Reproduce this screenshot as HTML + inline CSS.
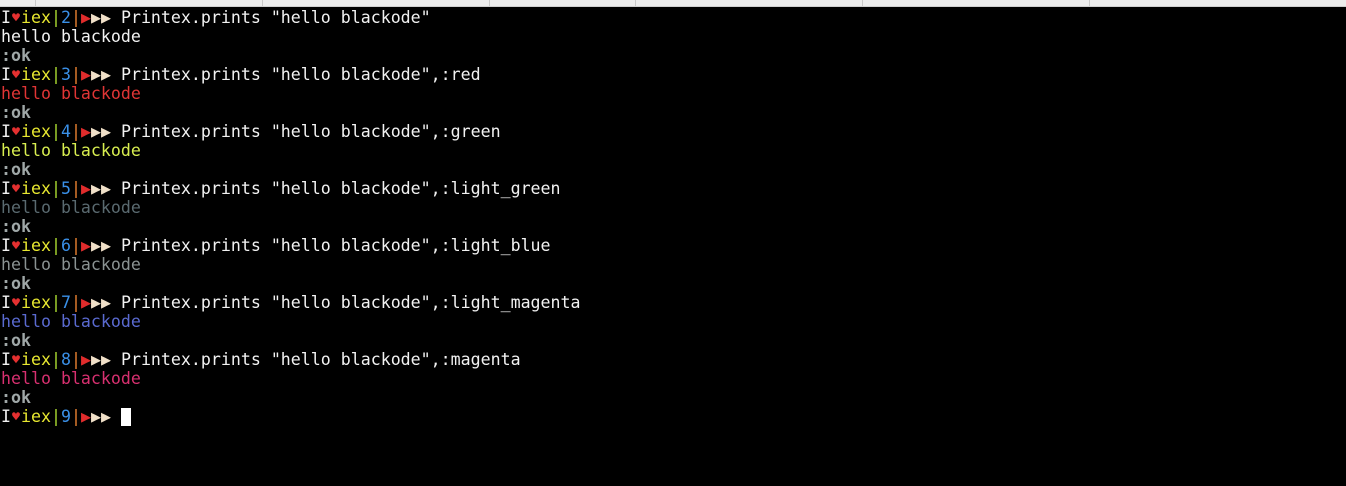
<!DOCTYPE html>
<html><head><style>
html,body{margin:0;padding:0;background:#000;width:1346px;height:486px;overflow:hidden}
.bar{position:absolute;left:0;top:0;width:1346px;height:6px;background:#ececec;border-bottom:1px solid #cfcfcf}
.bar i{position:absolute;top:0;width:1px;height:6px;background:#c8c8c8}
pre{position:absolute;left:1px;top:8px;margin:0;font-family:"DejaVu Sans Mono","Liberation Mono",monospace;font-size:16.6px;line-height:19px;color:#f2f2f2;white-space:pre}
.h{color:#e53030;display:inline-block;width:10px;height:19px;line-height:19px;vertical-align:top;text-align:center;overflow:hidden;transform:scale(0.8)}
.y{color:#e8e830}.g{color:#a8d830}.b{color:#3a90e8}.o{color:#e88030}.r{color:#e02c2c}.w{color:#f0e0c8}
.ok{color:#a0a8a8;font-weight:bold}
.cur{display:inline-block;width:10px;height:18px;background:#fff;vertical-align:-4px}
</style></head><body>
<div class="bar"><i style="left:35px"></i><i style="left:262px"></i><i style="left:489px"></i><i style="left:635px"></i><i style="left:862px"></i><i style="left:1089px"></i></div>
<pre><span>I</span><span class="h">♥</span><span class="y">iex</span><span class="g">|</span><span class="b">2</span><span class="o">|</span><span class="r">▶</span><span class="w">▶▶</span> Printex.prints "hello blackode"
hello blackode
<span class="ok">:ok</span>
<span>I</span><span class="h">♥</span><span class="y">iex</span><span class="g">|</span><span class="b">3</span><span class="o">|</span><span class="r">▶</span><span class="w">▶▶</span> Printex.prints "hello blackode",:red
<span style="color:#e03535">hello blackode</span>
<span class="ok">:ok</span>
<span>I</span><span class="h">♥</span><span class="y">iex</span><span class="g">|</span><span class="b">4</span><span class="o">|</span><span class="r">▶</span><span class="w">▶▶</span> Printex.prints "hello blackode",:green
<span style="color:#d8ee50">hello blackode</span>
<span class="ok">:ok</span>
<span>I</span><span class="h">♥</span><span class="y">iex</span><span class="g">|</span><span class="b">5</span><span class="o">|</span><span class="r">▶</span><span class="w">▶▶</span> Printex.prints "hello blackode",:light_green
<span style="color:#5a6a70">hello blackode</span>
<span class="ok">:ok</span>
<span>I</span><span class="h">♥</span><span class="y">iex</span><span class="g">|</span><span class="b">6</span><span class="o">|</span><span class="r">▶</span><span class="w">▶▶</span> Printex.prints "hello blackode",:light_blue
<span style="color:#8a9292">hello blackode</span>
<span class="ok">:ok</span>
<span>I</span><span class="h">♥</span><span class="y">iex</span><span class="g">|</span><span class="b">7</span><span class="o">|</span><span class="r">▶</span><span class="w">▶▶</span> Printex.prints "hello blackode",:light_magenta
<span style="color:#5a6ad0">hello blackode</span>
<span class="ok">:ok</span>
<span>I</span><span class="h">♥</span><span class="y">iex</span><span class="g">|</span><span class="b">8</span><span class="o">|</span><span class="r">▶</span><span class="w">▶▶</span> Printex.prints "hello blackode",:magenta
<span style="color:#d83070">hello blackode</span>
<span class="ok">:ok</span>
<span>I</span><span class="h">♥</span><span class="y">iex</span><span class="g">|</span><span class="b">9</span><span class="o">|</span><span class="r">▶</span><span class="w">▶▶</span> <span class="cur"></span></pre>
</body></html>
